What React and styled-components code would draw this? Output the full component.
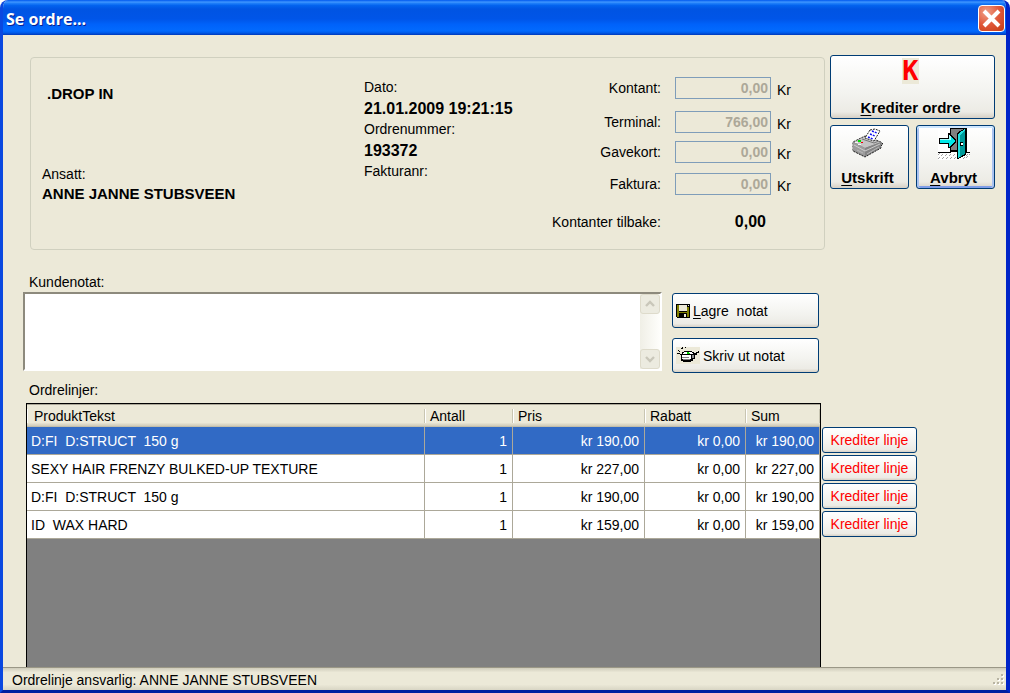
import styled, { createGlobalStyle, css } from 'styled-components'

const payments = [
  { id: 'kontant', label: 'Kontant:', value: '0,00' },
  { id: 'terminal', label: 'Terminal:', value: '766,00' },
  { id: 'gavekort', label: 'Gavekort:', value: '0,00' },
  { id: 'faktura', label: 'Faktura:', value: '0,00' },
]

const orderLines = [
  { text: 'D:FI  D:STRUCT  150 g', count: 1, price: 'kr 190,00', discount: 'kr 0,00', sum: 'kr 190,00' },
  { text: 'SEXY HAIR FRENZY BULKED-UP TEXTURE', count: 1, price: 'kr 227,00', discount: 'kr 0,00', sum: 'kr 227,00' },
  { text: 'D:FI  D:STRUCT  150 g', count: 1, price: 'kr 190,00', discount: 'kr 0,00', sum: 'kr 190,00' },
  { text: 'ID  WAX HARD', count: 1, price: 'kr 159,00', discount: 'kr 0,00', sum: 'kr 159,00' },
]

export default function App() {
  return (
    <>
      <GlobalStyle />
      <Window>
        <TitleBar>
          <h1>Se ordre...</h1>
          <CloseButton type='button' aria-label='Lukk'>
            <CloseIcon />
          </CloseButton>
        </TitleBar>
        <Body>
          <TopRow>
            <OrderInfo />
            <Actions>
              <WideAction type='button'>
                <RedK>K</RedK>
                <span>
                  <u>K</u>rediter ordre
                </span>
              </WideAction>
              <ActionButton type='button'>
                <PrinterIcon />
                <span>
                  <u>U</u>tskrift
                </span>
              </ActionButton>
              <ActionButton type='button' $default>
                <DoorIcon />
                <span>
                  <u>A</u>vbryt
                </span>
              </ActionButton>
            </Actions>
          </TopRow>
          <SectionLabel htmlFor='notat'>Kundenotat:</SectionLabel>
          <NoteRow>
            <NoteFrame>
              <textarea id='notat' />
              <ScrollTrack>
                <ScrollButton type='button' disabled aria-label='Opp'>
                  <Chevron d='M1 6L5 2L9 6' />
                </ScrollButton>
                <ScrollButton type='button' disabled aria-label='Ned'>
                  <Chevron d='M1 2L5 6L9 2' />
                </ScrollButton>
              </ScrollTrack>
            </NoteFrame>
            <NoteButtons>
              <NoteButton type='button'>
                <FloppyIcon />
                <span>
                  <u>L</u>agre&nbsp; notat
                </span>
              </NoteButton>
              <NoteButton type='button'>
                <SmallPrinterIcon />
                <span>Skriv ut notat</span>
              </NoteButton>
            </NoteButtons>
          </NoteRow>
          <LinesTitle id='ordrelinjer'>Ordrelinjer:</LinesTitle>
          <LinesRow>
            <Grid>
              <OrderTable aria-labelledby='ordrelinjer'>
                <colgroup>
                  <col />
                  <Col $w={88} />
                  <Col $w={132} />
                  <Col $w={101} />
                  <Col $w={74} />
                </colgroup>
                <thead>
                  <tr>
                    <Th>ProduktTekst</Th>
                    <Th>Antall</Th>
                    <Th>Pris</Th>
                    <Th>Rabatt</Th>
                    <Th>Sum</Th>
                  </tr>
                </thead>
                <tbody>
                  {orderLines.map((line, i) => (
                    <Line key={i} $selected={i === 0}>
                      <Td>{line.text}</Td>
                      <Td $right>{line.count}</Td>
                      <Td $right>{line.price}</Td>
                      <Td $right>{line.discount}</Td>
                      <Td $right>{line.sum}</Td>
                    </Line>
                  ))}
                </tbody>
              </OrderTable>
            </Grid>
            <LineButtons>
              {orderLines.map((line, i) => (
                <LineButton key={i} type='button'>
                  Krediter linje
                </LineButton>
              ))}
            </LineButtons>
          </LinesRow>
        </Body>
        <StatusBar>
          <span>Ordrelinje ansvarlig: ANNE JANNE STUBSVEEN</span>
          <SizeGrip />
        </StatusBar>
      </Window>
    </>
  )
}

function OrderInfo() {
  return (
    <GroupBox>
      <Customer>
        <Strong $indent>.DROP IN</Strong>
        <div>
          <p>Ansatt:</p>
          <Strong>ANNE JANNE STUBSVEEN</Strong>
        </div>
      </Customer>
      <OrderFacts>
        <p>Dato:</p>
        <Strong>21.01.2009 19:21:15</Strong>
        <p>Ordrenummer:</p>
        <Strong>193372</Strong>
        <p>Fakturanr:</p>
      </OrderFacts>
      <Payments>
        {payments.map(({ id, label, value }) => (
          <PaymentRow key={id}>
            <label htmlFor={id}>{label}</label>
            <Amount id={id} defaultValue={value} disabled />
            <Unit>Kr</Unit>
          </PaymentRow>
        ))}
        <PaymentRow>
          <span>Kontanter tilbake:</span>
          <Change>0,00</Change>
        </PaymentRow>
      </Payments>
    </GroupBox>
  )
}

function CloseIcon() {
  return (
    <svg width='21' height='21' viewBox='0 0 21 21'>
      <path d='M3 3L18 18M18 3L3 18' stroke='#fff' strokeWidth='4' />
    </svg>
  )
}

function Chevron({ d }) {
  return (
    <svg width='10' height='8' viewBox='0 0 10 8'>
      <path d={d} fill='none' stroke='#c9c7ba' strokeWidth='2.4' />
    </svg>
  )
}

function PrinterIcon() {
  return (
    <svg width='32' height='32' viewBox='0 0 32 32'>
      <path d='M13 8L29 14L30 15L31 16L29 18V20L13 29L1 23V14Z' fill='#888' stroke='#222' strokeDasharray='2 1' />
      <path d='M2 14L12 9L29 14L13 20Z' fill='#c4c4c4' />
      <path d='M1 14L13 20V28L1 22Z' fill='#9c9c9c' />
      <path d='M13 20L29 14V19L13 28Z' fill='#858585' />
      <path d='M2 17L13 23L28 16' fill='none' stroke='#ccc' />
      <path d='M5 22L11 25M15 26L27 19' fill='none' stroke='#b8b8b8' />
      <path d='M10 11L22 15L27 13' fill='none' stroke='#777' />
      <path d='M18 2L23 1L28 3L22 13L13 10Z' fill='#fff' stroke='#222' strokeDasharray='2 1' />
      <path d='M20 3L25 5M18 6L23 8M16 9L21 11' stroke='#1010f0' strokeWidth='1.5' strokeDasharray='2 1' />
      <path d='M6 12h3v2h-3z' fill='#00e000' />
      <path d='M9 14h2v1h-2z' fill='#f00000' />
      <path d='M3 14h3v1h-3zM6 16h3v1h-3z' fill='#f4f4f4' />
    </svg>
  )
}

function DoorIcon() {
  return (
    <svg width='32' height='32' viewBox='0 0 32 32' shapeRendering='crispEdges'>
      <rect width='32' height='32' fill='#fff' />
      <path
        d='M0 27l2-2M0 31l6-6M4 31l6-6M8 31l6-6M12 31l6-6M16 31l4-4M28 30l4-4M25 31l6-6'
        stroke='#a0a0a0'
        strokeDasharray='1 1'
      />
      <path d='M0 24.5H13M28 24.5H32' fill='none' stroke='#000' />
      <path d='M12 0H29V24H12Z' fill='#000' />
      <path d='M13 1H28V22H13Z' fill='#808080' />
      <path d='M19 5L27 0H28V27L20 31H19Z' fill='#000' />
      <path d='M20 6L27 1V26L20 30Z' fill='#009c9c' />
      <path d='M20 6L27 1V3L22 7V28L20 30Z' fill='#20e0e0' />
      <path d='M22 14h3v4h-3z' fill='#000' />
      <path d='M23 15h2v2h-2z' fill='#fff' />
      <path d='M1 10H10V5H12L18 12V14L12 20H10V16H1Z' fill='#000' />
      <path d='M2 11H11V7L17 13L11 19V15H2Z' fill='#00e8e8' />
      <path d='M2 11H11V7L13 9V12H2Z' fill='#a8ffff' />
    </svg>
  )
}

function FloppyIcon() {
  return (
    <svg width='14' height='14' viewBox='0 0 14 14' shapeRendering='crispEdges'>
      <path d='M0 0H14V14H1L0 13Z' fill='#000' />
      <path d='M1 1H3V13H1ZM11 3H13V13H11ZM2 8H12V9H2Z' fill='#808000' />
      <path d='M3 1H11V7H3Z' fill='#ece9d8' />
      <path d='M12 1h1v1h-1z' fill='#ece9d8' />
      <path d='M8 10h2v3h-2z' fill='#ece9d8' />
    </svg>
  )
}

function SmallPrinterIcon() {
  return (
    <svg width='24' height='17' viewBox='0 0 24 17' shapeRendering='crispEdges'>
      <rect width='24' height='17' fill='#ece9d8' />
      <path d='M2 3h1v1h-1zM3 4h1v1h-1zM5 1h1v1h-1zM6 0h1v2h-1zM9 0h1v1h-1zM1 6h3v1h-3z' fill='#000' />
      <path d='M6 5H8V4H16V5H18V6H20V5H22V4H23V6H21V8H19V12H17V14H15V15H7V14H5V8H4V7H6Z' fill='#000' />
      <path d='M8 5H16V6H17V7H7V6H8Z' fill='#fff' />
      <path d='M6 8H15V12H6Z' fill='#fff' />
      <path d='M6 10H13V11H6ZM7 12H14V13H7Z' fill='#808080' />
      <path d='M16 8H18V11H16Z' fill='#909090' />
      <path d='M11 5h2v1h1v1h-3z' fill='#00d000' />
    </svg>
  )
}

function SizeGrip() {
  const dots = [
    [8, 0],
    [4, 4],
    [8, 4],
    [0, 8],
    [4, 8],
    [8, 8],
  ]
  return (
    <svg width='12' height='12' shapeRendering='crispEdges'>
      {dots.map(([x, y]) => (
        <g key={`${x}-${y}`}>
          <rect x={x + 1} y={y + 1} width='2' height='2' fill='#fff' />
          <rect x={x} y={y} width='2' height='2' fill='#b8b4a3' />
        </g>
      ))}
    </svg>
  )
}

const GlobalStyle = createGlobalStyle`
  * {
    box-sizing: border-box;
  }
  body {
    margin: 0;
    background: #fff;
    color: #000;
    font: 14px/20px 'Liberation Sans', Arial, sans-serif;
  }
  button,
  input,
  textarea {
    font: inherit;
    color: inherit;
    margin: 0;
  }
  h1,
  h2,
  p {
    margin: 0;
  }
  u {
    text-underline-offset: 2px;
  }
`

const Window = styled.div`
  display: flex;
  flex-direction: column;
  min-height: 100vh;
  border: solid;
  border-width: 0 4px 3px 3px;
  border-color: #0021c8 #0024c8 #001ea0 #0a48e0;
  border-radius: 8px 8px 0 0;
  background: #ece9d8;
  overflow: hidden;
`

const TitleBar = styled.header`
  display: flex;
  align-items: center;
  justify-content: space-between;
  height: 35px;
  margin: 0 -4px 0 -3px;
  padding: 2px 5px 0 6px;
  background: linear-gradient(
    #0058ee 0%,
    #3f96ff 6%,
    #1c7cf8 10%,
    #0262ee 16%,
    #0054e3 26%,
    #0055e8 54%,
    #0062fa 70%,
    #026afe 88%,
    #005ae8 94%,
    #0038b8 100%
  );
  h1 {
    color: #fff;
    font: bold 16px/20px 'Open Sans', 'Noto Sans', sans-serif;
    text-shadow: 1px 1px 0 #0a1f8f;
  }
`

const CloseButton = styled.button`
  display: flex;
  align-items: center;
  justify-content: center;
  width: 27px;
  height: 27px;
  padding: 0;
  border: 1px solid #fff;
  border-radius: 4px;
  background: radial-gradient(circle at 30% 25%, #f0a088, #e0583a 50%, #c43c14);
`

const Body = styled.main`
  display: flex;
  flex-direction: column;
  flex: 1;
  padding-top: 20px;
`

const TopRow = styled.div`
  display: flex;
  align-items: flex-start;
  gap: 5px;
  padding: 0 11px 0 27px;
`

const GroupBox = styled.section`
  display: flex;
  flex: 1;
  height: 193px;
  margin-top: 2px;
  padding: 19px 23px 0 11px;
  border: 1px solid #d0d0bf;
  border-radius: 4px;
`

const Customer = styled.div`
  display: flex;
  flex-direction: column;
  gap: 60px;
  width: 322px;
  padding-top: 7px;
`

const Strong = styled.strong`
  display: block;
  font-size: 15px;
  padding-left: ${({ $indent }) => ($indent ? '5px' : 0)};
`

const OrderFacts = styled.div`
  flex: 1;
  line-height: 21px;
  ${Strong} {
    font-size: 16px;
  }
`

const Payments = styled.div`
  display: grid;
  grid-template-rows: 34px 30px 32px 38px 22px;
  width: 256px;
`

const PaymentRow = styled.div`
  display: grid;
  grid-template-columns: 1fr 96px 24px;
  column-gap: 6px;
  align-items: start;
  line-height: 22px;
  white-space: nowrap;
  > :first-child {
    padding-right: 8px;
    text-align: right;
  }
`

const Amount = styled.input`
  width: 100%;
  height: 22px;
  padding: 0 2px;
  border: 1px solid #7f9db9;
  background: #ece9d8;
  color: #aca899;
  font-weight: bold;
  text-align: right;
`

const Unit = styled.span`
  padding-top: 2px;
`

const Change = styled.strong`
  padding-right: 5px;
  font-size: 16px;
  text-align: right;
`

const Actions = styled.div`
  display: grid;
  grid-template-columns: 1fr 1fr;
  gap: 6px 7px;
  width: 165px;
`

const XpButton = styled.button`
  padding: 0;
  border: 1px solid #003c74;
  border-radius: 3px;
  background: linear-gradient(#fff, #f3f3ef 60%, #ecebe5 90%, #d6d0c5);
`

const ActionButton = styled(XpButton)`
  display: flex;
  flex-direction: column;
  align-items: center;
  justify-content: space-between;
  height: 64px;
  padding: 2px 4px 0 0;
  font-size: 15px;
  font-weight: bold;
  ${({ $default }) =>
    $default &&
    css`
      box-shadow:
        inset 0 2px #cee7ff,
        inset 2px 0 #a9c2f0,
        inset -2px 0 #a9c2f0,
        inset 0 -2px #7f9de8;
    `}
`

const WideAction = styled(ActionButton)`
  grid-column: 1 / -1;
`

const RedK = styled.span`
  background: #ece9d8;
  color: #f00;
  font: bold 27px/26px 'DejaVu Sans Mono', monospace;
`

const SectionLabel = styled.label`
  margin-top: 22px;
  padding-left: 26px;
`

const NoteRow = styled.div`
  display: flex;
  gap: 10px;
  padding: 0 187px 0 20px;
`

const NoteFrame = styled.div`
  display: flex;
  flex: 1;
  height: 79px;
  border: 2px solid;
  border-color: #8d8a7d #fff #fff #8d8a7d;
  background: #fff;
  textarea {
    flex: 1;
    padding: 2px;
    border: 0;
    outline: 0;
    resize: none;
    background: #fff;
  }
`

const ScrollTrack = styled.div`
  display: flex;
  flex-direction: column;
  justify-content: space-between;
  width: 20px;
  background: linear-gradient(90deg, #f0efe6, #fefefb);
`

const ScrollButton = styled.button`
  display: flex;
  align-items: center;
  justify-content: center;
  height: 20px;
  padding: 0;
  border: 1px solid #dedbcb;
  border-radius: 3px;
  background: #ecebe0;
`

const NoteButtons = styled.div`
  display: flex;
  flex-direction: column;
  gap: 10px;
  width: 147px;
  padding-top: 1px;
`

const NoteButton = styled(XpButton)`
  display: flex;
  align-items: center;
  gap: 3px;
  height: 35px;
  padding-left: 3px;
`

const LinesTitle = styled.h2`
  margin-top: 7px;
  padding-left: 26px;
  font: inherit;
`

const LinesRow = styled.div`
  display: flex;
  flex: 1;
  gap: 1px;
  margin-top: 3px;
  padding: 0 89px 0 23px;
`

const Grid = styled.div`
  flex: 1;
  border: 1px solid #000;
  border-bottom: 0;
  background: #808080;
`

const OrderTable = styled.table`
  width: 100%;
  table-layout: fixed;
  border-spacing: 0;
`

const Col = styled.col`
  width: ${({ $w }) => $w}px;
`

const Th = styled.th`
  height: 23px;
  padding: 0 0 0 5px;
  border-top: 1px solid #aca899;
  background:
    linear-gradient(#c8c5b2, #c8c5b2) right 0 center / 1px 14px no-repeat,
    linear-gradient(#fff, #fff) left 0 center / 1px 14px no-repeat,
    linear-gradient(#ece9d8 80%, #e0dccb 86%, #d2cebc 94%, #b8b4a0);
  font-weight: normal;
  text-align: left;
  &:first-child {
    padding-left: 7px;
  }
`

const Line = styled.tr`
  background: ${({ $selected }) => ($selected ? '#316ac5' : '#fff')};
  color: ${({ $selected }) => ($selected ? '#fff' : '#000')};
`

const Td = styled.td`
  height: 28px;
  padding: ${({ $right }) => ($right ? '0 5px 0 0' : '0 0 0 4px')};
  border: solid #aca899;
  border-width: 0 1px 1px 0;
  text-align: ${({ $right }) => ($right ? 'right' : 'left')};
  white-space: pre;
`

const LineButtons = styled.div`
  display: flex;
  flex-direction: column;
  gap: 2px;
  width: 95px;
  padding-top: 24px;
`

const LineButton = styled(XpButton)`
  height: 26px;
  color: #f00;
`

const StatusBar = styled.footer`
  display: flex;
  justify-content: space-between;
  align-items: center;
  height: 23px;
  padding: 2px 1px 0 9px;
  border-top: 1px solid #9a9786;
  background: linear-gradient(#cfccbb, #ece9d8 20%, #ece9d8 75%, #d8d5c4);
`
